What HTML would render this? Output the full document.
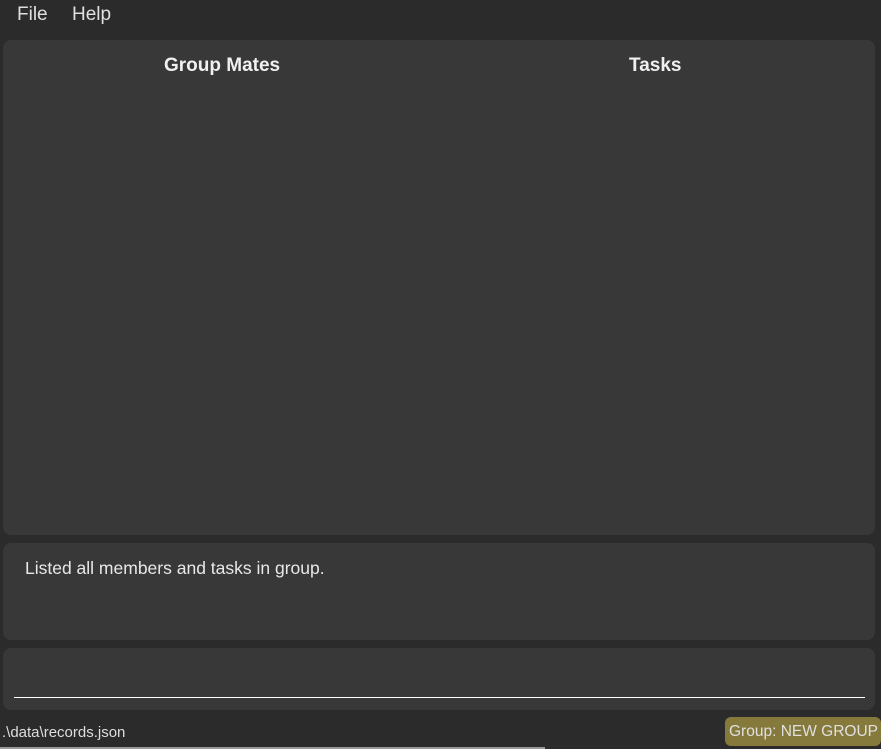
<!DOCTYPE html>
<html><head><meta charset="utf-8"><style>
*{margin:0;padding:0;box-sizing:border-box}
body{width:881px;height:749px;background:#2b2b2b;font-family:"Liberation Sans",sans-serif;position:relative;overflow:hidden;color:#fff}
.menu{position:absolute;top:0;left:0;width:881px;height:30px;background:#2b2b2b}
.menu span{position:absolute;top:4px;font-size:19px;color:#e0e0e0}
.panel{position:absolute;left:3px;width:872px;background:#383838;border-radius:8px}
h2{position:absolute;top:55px;font-size:19px;font-weight:bold;color:#f0f0f0}
.res{position:absolute;left:25px;top:558px;font-size:17.5px;color:#e8e8e8}
.line{position:absolute;left:14px;top:697px;width:851px;height:1px;background:#fff}
.path{position:absolute;left:2px;top:724px;font-size:15px;color:#ddd}
.badge{position:absolute;left:725px;top:717px;width:156px;height:29px;background:#857a3c;border-radius:6px;font-size:15.5px;color:#e0e0e0;padding:6px 0 0 4px}
.sb{position:absolute;left:0;top:747px;width:545px;height:2px;background:#999}
</style></head><body>
<div class="menu"><span style="left:17px">File</span><span style="left:72px">Help</span></div>
<div class="panel" style="top:40px;height:495px"></div>
<h2 style="left:164px">Group Mates</h2>
<h2 style="left:629px">Tasks</h2>
<div class="panel" style="top:543px;height:97px"></div>
<div class="res">Listed all members and tasks in group.</div>
<div class="panel" style="top:648px;height:62px"></div>
<div class="line"></div>
<div class="path">.\data\records.json</div>
<div class="badge">Group: NEW GROUP</div>
<div class="sb"></div>
</body></html>
